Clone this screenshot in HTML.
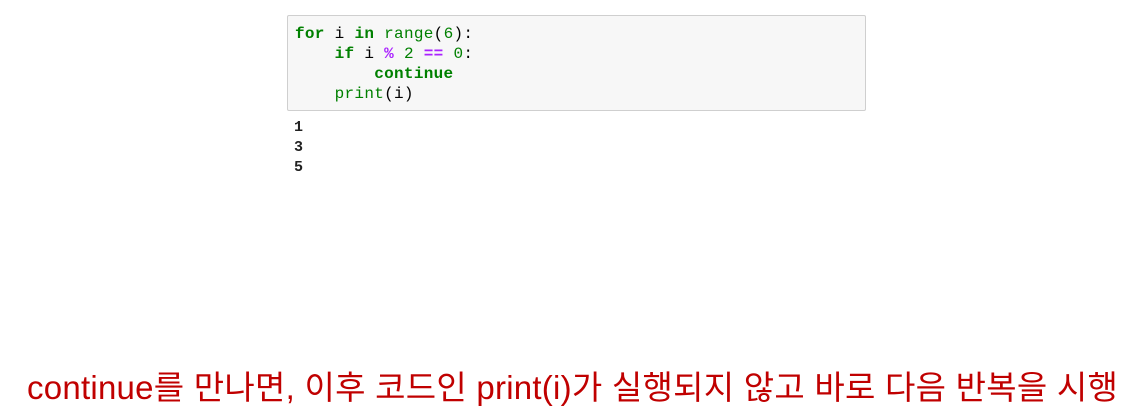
<!DOCTYPE html>
<html><head><meta charset="utf-8"><style>
html,body{margin:0;padding:0;background:#fff;width:1142px;height:417px;overflow:hidden;position:relative}
.code{position:absolute;left:287px;top:15px;width:577px;height:94px;background:#f7f7f7;border:1px solid #cfcfcf;border-radius:2px}
pre{margin:0;font-family:"Liberation Mono",monospace;font-size:16px;letter-spacing:0.3px;line-height:20px;color:#000}
.code pre{position:absolute;left:7px;top:8px}
.k{color:#008000;font-weight:bold}.b{color:#008000}.n{color:#008000}.o{color:#aa22ff;font-weight:bold}
.out{position:absolute;left:294px;top:118px}
.out pre{font-size:15px;font-weight:bold;color:#222}
.t{position:absolute;left:27px;top:361px;font-family:"Liberation Sans","Noto Sans CJK KR",sans-serif;font-size:33px;color:#c00000;white-space:nowrap;letter-spacing:0.25px}
</style></head><body>
<div class="code"><pre><span class="k">for</span> i <span class="k">in</span> <span class="b">range</span>(<span class="n">6</span>):
    <span class="k">if</span> i <span class="o">%</span> <span class="n">2</span> <span class="o">==</span> <span class="n">0</span>:
        <span class="k">continue</span>
    <span class="b">print</span>(i)</pre></div>
<div class="out"><pre>1
3
5</pre></div>
<div class="t">continue를 만나면, 이후 코드인 print(i)가 실행되지 않고 바로 다음 반복을 시행</div>
</body></html>
